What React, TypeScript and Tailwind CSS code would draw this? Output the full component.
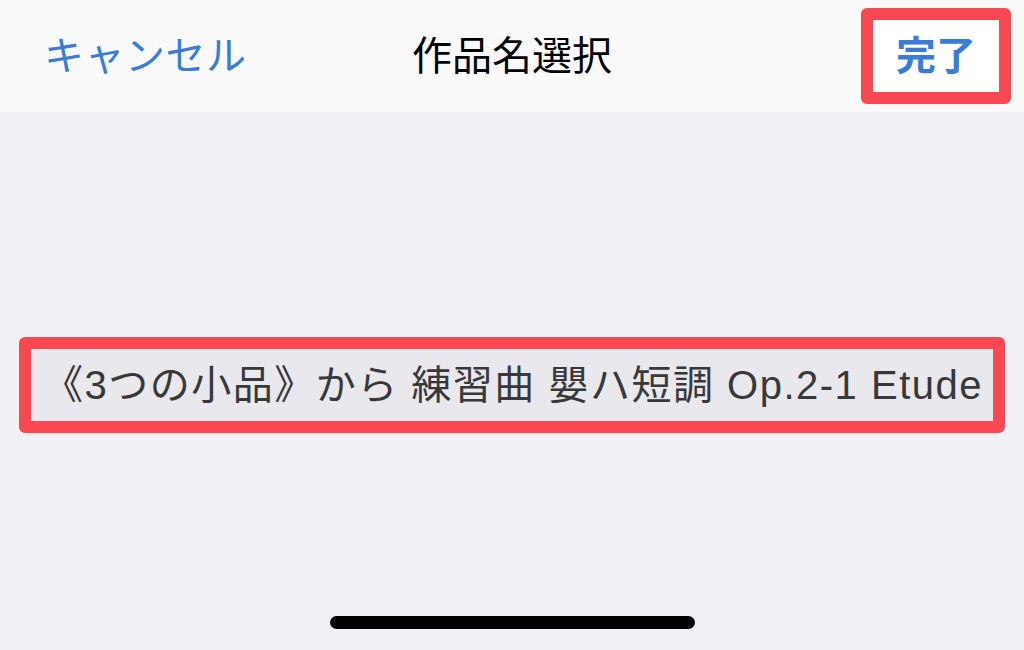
const jp = "font-['Liberation_Sans','Noto_Sans_CJK_JP',sans-serif]";

export default function App() {
  return (
    <div className={`flex h-[650px] w-[1024px] flex-col overflow-hidden bg-[#f0f0f5] ${jp}`}>
      {/* nav bar */}
      <header className="grid h-[112px] grid-cols-[1fr_auto_1fr] items-center bg-[#f9f9fa]">
        <button className="justify-self-start pl-[44px] text-[40px] leading-none tracking-[0.5px] text-[#3a7bd8]">
          キャンセル
        </button>
        <h1 className="text-[40px] leading-none text-black">作品名選択</h1>
        <div className="justify-self-end pr-[13px]">
          <div className="flex h-[96px] w-[150px] items-center justify-center rounded-[6px] border-[12px] border-[#f94852] bg-white">
            <span className="text-[40px] font-bold leading-none text-[#3a7bd8]">完了</span>
          </div>
        </div>
      </header>

      {/* title field */}
      <div className="px-[19px] pt-[225px]">
        <div className="flex h-[96px] items-center rounded-[6px] border-[12px] border-[#f94852] bg-[#e8e8ed] pl-[12px]">
          <span className="whitespace-nowrap text-[40px] leading-none tracking-[1.5px] text-[#38383a]">
            《3つの小品》から 練習曲 嬰ハ短調 Op.2-1 Etude
          </span>
        </div>
      </div>

      {/* home indicator */}
      <div className="mt-auto mb-[21px] flex justify-center">
        <div className="h-[13px] w-[365px] rounded-full bg-black" />
      </div>
    </div>
  );
}
